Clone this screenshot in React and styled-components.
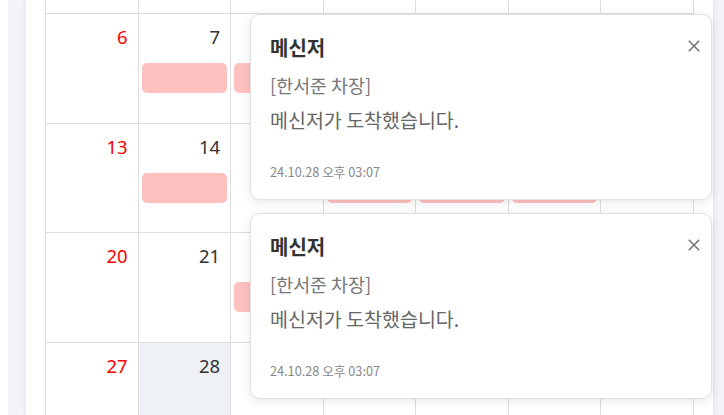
import React from "react";
import styled, { createGlobalStyle } from "styled-components";

const GlobalStyle = createGlobalStyle`
  html, body { margin: 0; padding: 0; background: #ffffff; overflow: hidden; }
  body { font-family: "Noto Sans", "Noto Sans CJK KR", sans-serif; }
  * { box-sizing: border-box; }
`;

const Frame = styled.div`
  position: relative;
  display: flex;
  height: 415px;
  padding-left: 8px;
  overflow: hidden;
`;

const Panel = styled.div`
  flex: 1;
  display: flex;
  background: #f3f4f8;
  padding: 0 11px 0 18px;
`;

const Card = styled.div`
  flex: 1;
  background: #ffffff;
  box-shadow: 0 0 5px rgba(60, 70, 100, 0.12);
  padding: 0 19px;
  overflow: hidden;
`;

const Month = styled.div`
  margin-top: -96.5px;
  display: grid;
  grid-template-columns: repeat(7, 1fr);
  grid-auto-rows: 109.5px;
  border-right: 1px solid #dddddd;
`;

const Cell = styled.div`
  border-top: 1px solid #dddddd;
  border-left: 1px solid #dddddd;
  background: ${(p) => (p.$today ? "#eef1f6" : "#ffffff")};
  display: flex;
  flex-direction: column;
  padding: 11px 0 0 3px;
`;

const DayNum = styled.div`
  text-align: right;
  padding-right: 10px;
  font-size: 18.5px;
  line-height: 24px;
  color: ${(p) => (p.$sun ? "#ff0000" : "#333333")};
`;

const EventBar = styled.div`
  margin: 14px 3px 0 0;
  height: 30px;
  border-radius: 5px;
  background: #ffc0c0;
`;

const ToastStack = styled.div`
  position: absolute;
  top: 14px;
  right: 12px;
  width: 462px;
  display: flex;
  flex-direction: column;
  gap: 13px;
`;

const Toast = styled.div`
  position: relative;
  background: #ffffff;
  border: 1px solid #e1e1e1;
  border-radius: 10px;
  box-shadow: 0 2px 10px rgba(0, 0, 0, 0.1);
  padding: 19px 20px 18px 19px;
  font-family: "Noto Sans CJK KR", "Noto Sans", sans-serif;
`;

const Title = styled.div`
  font-size: 20px;
  line-height: 28px;
  font-weight: 700;
  color: #333333;
`;

const Sender = styled.div`
  margin-top: 11px;
  font-size: 18.4px;
  line-height: 24px;
  color: #777777;
`;

const Message = styled.div`
  margin-top: 11px;
  font-size: 19.5px;
  line-height: 24px;
  color: #666666;
`;

const Stamp = styled.div`
  margin-top: 31px;
  font-size: 12.7px;
  line-height: 18px;
  color: #888888;
`;

const CloseBtn = styled.button`
  position: absolute;
  top: 25px;
  right: 11px;
  width: 12px;
  height: 12px;
  padding: 0;
  border: none;
  background: none;
  display: flex;
  cursor: pointer;
`;

const weeks = [
  { days: [29, 30, 1, 2, 3, 4, 5], bars: [] },
  { days: [6, 7, 8, 9, 10, 11, 12], bars: [1, 2] },
  { days: [13, 14, 15, 16, 17, 18, 19], bars: [1, 3, 4, 5] },
  { days: [20, 21, 22, 23, 24, 25, 26], bars: [2] },
  { days: [27, 28, 29, 30, 31, 1, 2], bars: [], today: 1 },
];

const CloseIcon = () => (
  <svg width="12" height="12" viewBox="0 0 12 12">
    <path d="M0.8 0.8 L11.2 11.2 M11.2 0.8 L0.8 11.2" stroke="#777777" strokeWidth="1.6" />
  </svg>
);

const toasts = [
  { id: 1, title: "메신저", sender: "[한서준 차장]", message: "메신저가 도착했습니다.", time: "24.10.28 오후 03:07" },
  { id: 2, title: "메신저", sender: "[한서준 차장]", message: "메신저가 도착했습니다.", time: "24.10.28 오후 03:07" },
];

export default function App() {
  return (
    <>
      <GlobalStyle />
      <Frame>
        <Panel>
          <Card>
            <Month>
              {weeks.map((w, wi) =>
                w.days.map((d, di) => (
                  <Cell key={`${wi}-${di}`} $today={w.today === di}>
                    <DayNum $sun={di === 0}>{d}</DayNum>
                    {w.bars.includes(di) && <EventBar />}
                  </Cell>
                ))
              )}
            </Month>
          </Card>
        </Panel>
        <ToastStack>
          {toasts.map((t) => (
            <Toast key={t.id}>
              <Title>{t.title}</Title>
              <Sender>{t.sender}</Sender>
              <Message>{t.message}</Message>
              <Stamp>{t.time}</Stamp>
              <CloseBtn aria-label="닫기">
                <CloseIcon />
              </CloseBtn>
            </Toast>
          ))}
        </ToastStack>
      </Frame>
    </>
  );
}
